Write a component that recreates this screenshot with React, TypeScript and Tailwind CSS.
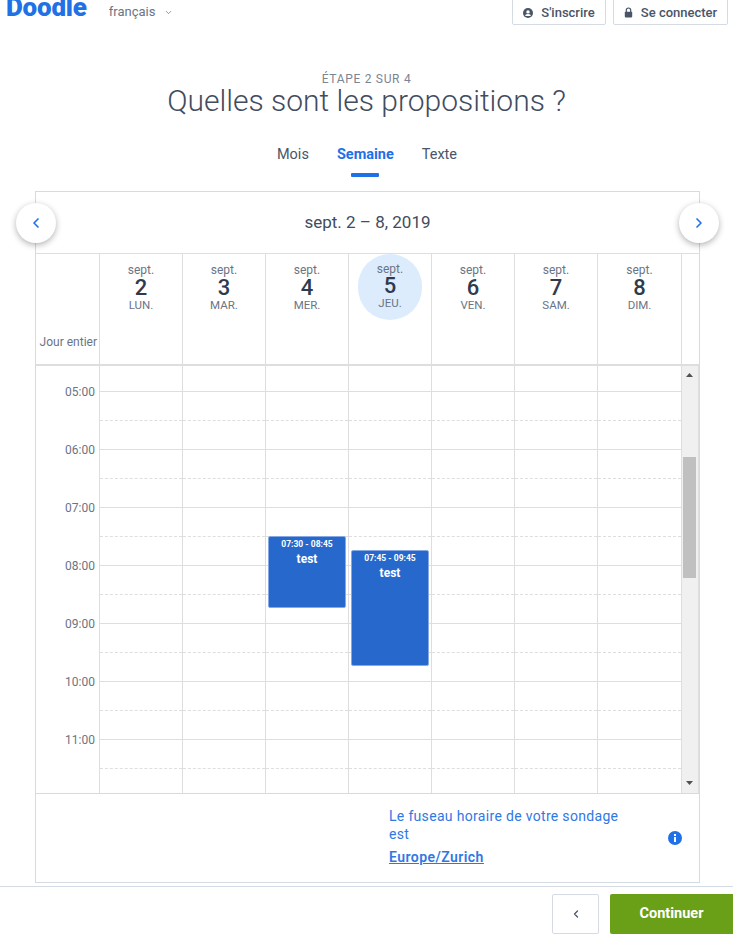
import { ChevronDown, ChevronLeft, ChevronRight } from 'lucide-react';

const days = [
  { date: '2', label: 'LUN.', width: 'w-[83px]' },
  { date: '3', label: 'MAR.', width: 'w-[83px]' },
  { date: '4', label: 'MER.', width: 'w-[83px]' },
  { date: '5', label: 'JEU.', width: 'w-[83px]', today: true },
  { date: '6', label: 'VEN.', width: 'w-[83px]' },
  { date: '7', label: 'SAM.', width: 'w-[83px]' },
  { date: '8', label: 'DIM.', width: 'w-[84px]' },
];

const hours = ['05:00', '06:00', '07:00', '08:00', '09:00', '10:00', '11:00'];

function UserIcon() {
  return (
    <svg width="10" height="10" viewBox="0 0 10 10" className="shrink-0">
      <circle cx="5" cy="5" r="5" fill="#4a5568" />
      <circle cx="5" cy="3.9" r="1.7" fill="#fff" />
      <path d="M2.2 8a2.8 2 0 0 1 5.6 0z" fill="#fff" />
    </svg>
  );
}

function LockIcon() {
  return (
    <svg width="9" height="11" viewBox="0 0 9 11" className="shrink-0">
      <path d="M2.3 5V3.2a2.2 2.2 0 0 1 4.4 0V5" fill="none" stroke="#4a5568" strokeWidth="1.2" />
      <rect x="0.8" y="4.8" width="7.4" height="5.6" rx="0.8" fill="#4a5568" />
    </svg>
  );
}

function HourCells() {
  return (
    <>
      {days.map((d) => (
        <div key={d.date} className={`${d.width} shrink-0 border-r border-[#dedede] flex flex-col`}>
          <div className="h-[29px] border-t border-[#dedede]" />
          <div className="h-[29px] border-t border-dashed border-[#dedede]" />
        </div>
      ))}
    </>
  );
}

export default function App() {
  return (
    <div className="relative w-[733px] h-[937px] overflow-hidden bg-white font-['Roboto','Noto_Sans',sans-serif] text-[#4a5568]">
      {/* Header */}
      <header className="h-[25px] flex items-end">
        <span className="ml-[6px] mb-[5px] text-[26px] leading-[26px] font-black tracking-[-0.2px] text-[#2171e6]">Doodle</span>
        <span className="ml-[22px] mb-[5px] flex items-center gap-[9px] text-[13px] leading-[16px] text-[#6b7484]">
          français
          <ChevronDown size={9} strokeWidth={2} />
        </span>
        <div className="ml-auto mr-[5px] flex gap-[7px]">
          <button className="w-[94px] h-[30px] -mt-[6px] pt-[5px] flex items-center justify-center gap-[8px] border border-[#d5dbe3] rounded-b-[2px] text-[13px] font-medium">
            <UserIcon />
            S'inscrire
          </button>
          <button className="w-[115px] h-[30px] -mt-[6px] pt-[5px] flex items-center justify-center gap-[8px] border border-[#d5dbe3] rounded-b-[2px] text-[13px] font-medium">
            <LockIcon />
            Se connecter
          </button>
        </div>
      </header>

      {/* Title */}
      <div className="mt-[47px] flex flex-col items-center">
        <p className="text-[12px] leading-[14px] tracking-[0.7px] text-[#7b8494]">ÉTAPE 2 SUR 4</p>
        <h1 className="-mt-[3px] text-[30px] leading-[36px] font-light tracking-[0px] text-[#414c5e]">Quelles sont les propositions ?</h1>
      </div>

      {/* Tabs */}
      <nav className="mt-[26px] flex justify-center gap-[28px] text-[14.5px] leading-[20px]">
        <span className="pl-[1px]">Mois</span>
        <span className="relative font-bold text-[#2171e6]">
          Semaine
          <span className="absolute left-[14px] top-[28px] w-[28px] h-[4px] rounded-[1px] bg-[#2171e6]" />
        </span>
        <span>Texte</span>
      </nav>

      {/* Calendar */}
      <section className="relative mt-[26px] ml-[35px] w-[665px] border border-[#d5dbe3]">
        <div className="h-[61px] flex items-center justify-center text-[17px] text-[#414c5e]">
          sept. 2 – 8, 2019
        </div>
        <button className="absolute -left-[20px] top-[11px] w-[40px] h-[40px] rounded-full bg-white shadow-[0_2px_6px_rgba(0,0,0,0.3)] flex items-center justify-center text-[#2171e6]">
          <ChevronLeft size={16} strokeWidth={2.5} />
        </button>
        <button className="absolute -right-[20px] top-[11px] w-[40px] h-[40px] rounded-full bg-white shadow-[0_2px_6px_rgba(0,0,0,0.3)] flex items-center justify-center text-[#2171e6]">
          <ChevronRight size={16} strokeWidth={2.5} />
        </button>

        {/* Day headings */}
        <div className="flex h-[113px] border-t border-b-2 border-[#dedede]">
          <div className="w-[64px] shrink-0 border-r border-[#dedede] flex items-end justify-end pr-[2px] pb-[14px] text-[12px] leading-[16px] text-[#6b7484]">
            Jour entier
          </div>
          {days.map((d) => (
            <div key={d.date} className={`relative ${d.width} shrink-0 border-r border-[#dedede] flex flex-col items-center pt-[9px]`}>
              {d.today && <div className="absolute left-[9px] top-0 w-[64px] h-[66px] rounded-full bg-[#dcecfd]" />}
              <span className={`relative text-[12px] leading-[14px] text-[#6b7484] ${d.today ? '-mt-[1px]' : ''}`}>sept.</span>
              <span className={`relative text-[22px] leading-[21px] font-medium text-[#2f3a4c] ${d.today ? '-mt-[1px]' : ''}`}>{d.date}</span>
              <span className="relative text-[11.5px] leading-[14px] text-[#6b7484]">{d.label}</span>
            </div>
          ))}
          <div className="flex-1" />
        </div>

        {/* Time grid */}
        <div className="relative h-[427px] overflow-hidden flex">
          <div className="relative w-[646px] shrink-0">
            <div className="flex h-[25px]">
              <div className="w-[64px] shrink-0 border-r border-[#dedede]" />
              {days.map((d) => (
                <div key={d.date} className={`${d.width} shrink-0 border-r border-[#dedede]`} />
              ))}
            </div>
            {hours.map((h) => (
              <div key={h} className="flex h-[58px]">
                <div className="w-[64px] shrink-0 border-r border-[#dedede] pr-[4px] text-right text-[12px] leading-[14px] text-[#6b7484]">
                  <span className="block -translate-y-[6px]">{h}</span>
                </div>
                <HourCells />
              </div>
            ))}
            {/* Events */}
            <div className="absolute left-[232px] top-[170px] w-[78px] h-[72px] rounded-[2px] border border-[#86a9e4] bg-[#2768cc] text-white text-center">
              <p className="text-[8.5px] leading-[12px] font-bold mt-[1px]">07:30 - 08:45</p>
              <p className="text-[12px] leading-[16px] font-bold mt-[1px]">test</p>
            </div>
            <div className="absolute left-[315px] top-[184px] w-[78px] h-[116px] rounded-[2px] border border-[#86a9e4] bg-[#2768cc] text-white text-center">
              <p className="text-[8.5px] leading-[12px] font-bold mt-[1px]">07:45 - 09:45</p>
              <p className="text-[12px] leading-[16px] font-bold mt-[1px]">test</p>
            </div>
          </div>
          {/* Scrollbar */}
          <div className="relative w-[17px] bg-[#f0f0f0] border-r border-[#dedede]">
            <svg width="7" height="4" viewBox="0 0 7 4" className="absolute left-[4px] top-[7px]">
              <path d="M3.5 0l3.5 4H0z" fill="#505050" />
            </svg>
            <div className="absolute left-[1px] top-[91px] w-[13px] h-[121px] bg-[#c0c0c0]" />
            <svg width="7" height="4" viewBox="0 0 7 4" className="absolute left-[4px] bottom-[8px]">
              <path d="M3.5 4l3.5-4H0z" fill="#505050" />
            </svg>
          </div>
        </div>

        {/* Time zone */}
        <div className="h-[89px] border-t border-[#d5dbe3] flex items-center">
          <div className="ml-[353px] w-[236px] -mt-[3px] text-[14px] leading-[18px] tracking-[0.32px] text-[#2f78e4]">
            <p>Le fuseau horaire de votre sondage est</p>
            <a className="mt-[5px] block font-semibold tracking-[0.45px] underline">Europe/Zurich</a>
          </div>
          <svg width="14" height="14" viewBox="0 0 14 14" className="ml-[43px]">
            <circle cx="7" cy="7" r="7" fill="#2171e6" />
            <rect x="6" y="6" width="2" height="5" fill="#fff" />
            <rect x="6" y="3" width="2" height="2" fill="#fff" />
          </svg>
        </div>
      </section>

      {/* Footer */}
      <footer className="mt-[3px] h-[51px] border-t border-[#d5dbe3] pt-[7px] flex justify-end">
        <button className="w-[47px] h-[40px] border border-[#d5dbe3] rounded-[2px] flex items-center justify-center text-[#4a5568]">
          <ChevronLeft size={12} strokeWidth={2.5} />
        </button>
        <button className="ml-[11px] w-[123px] h-[40px] rounded-l-[2px] bg-[#6aa018] text-white text-[14.5px] font-bold">
          Continuer
        </button>
      </footer>
    </div>
  );
}
